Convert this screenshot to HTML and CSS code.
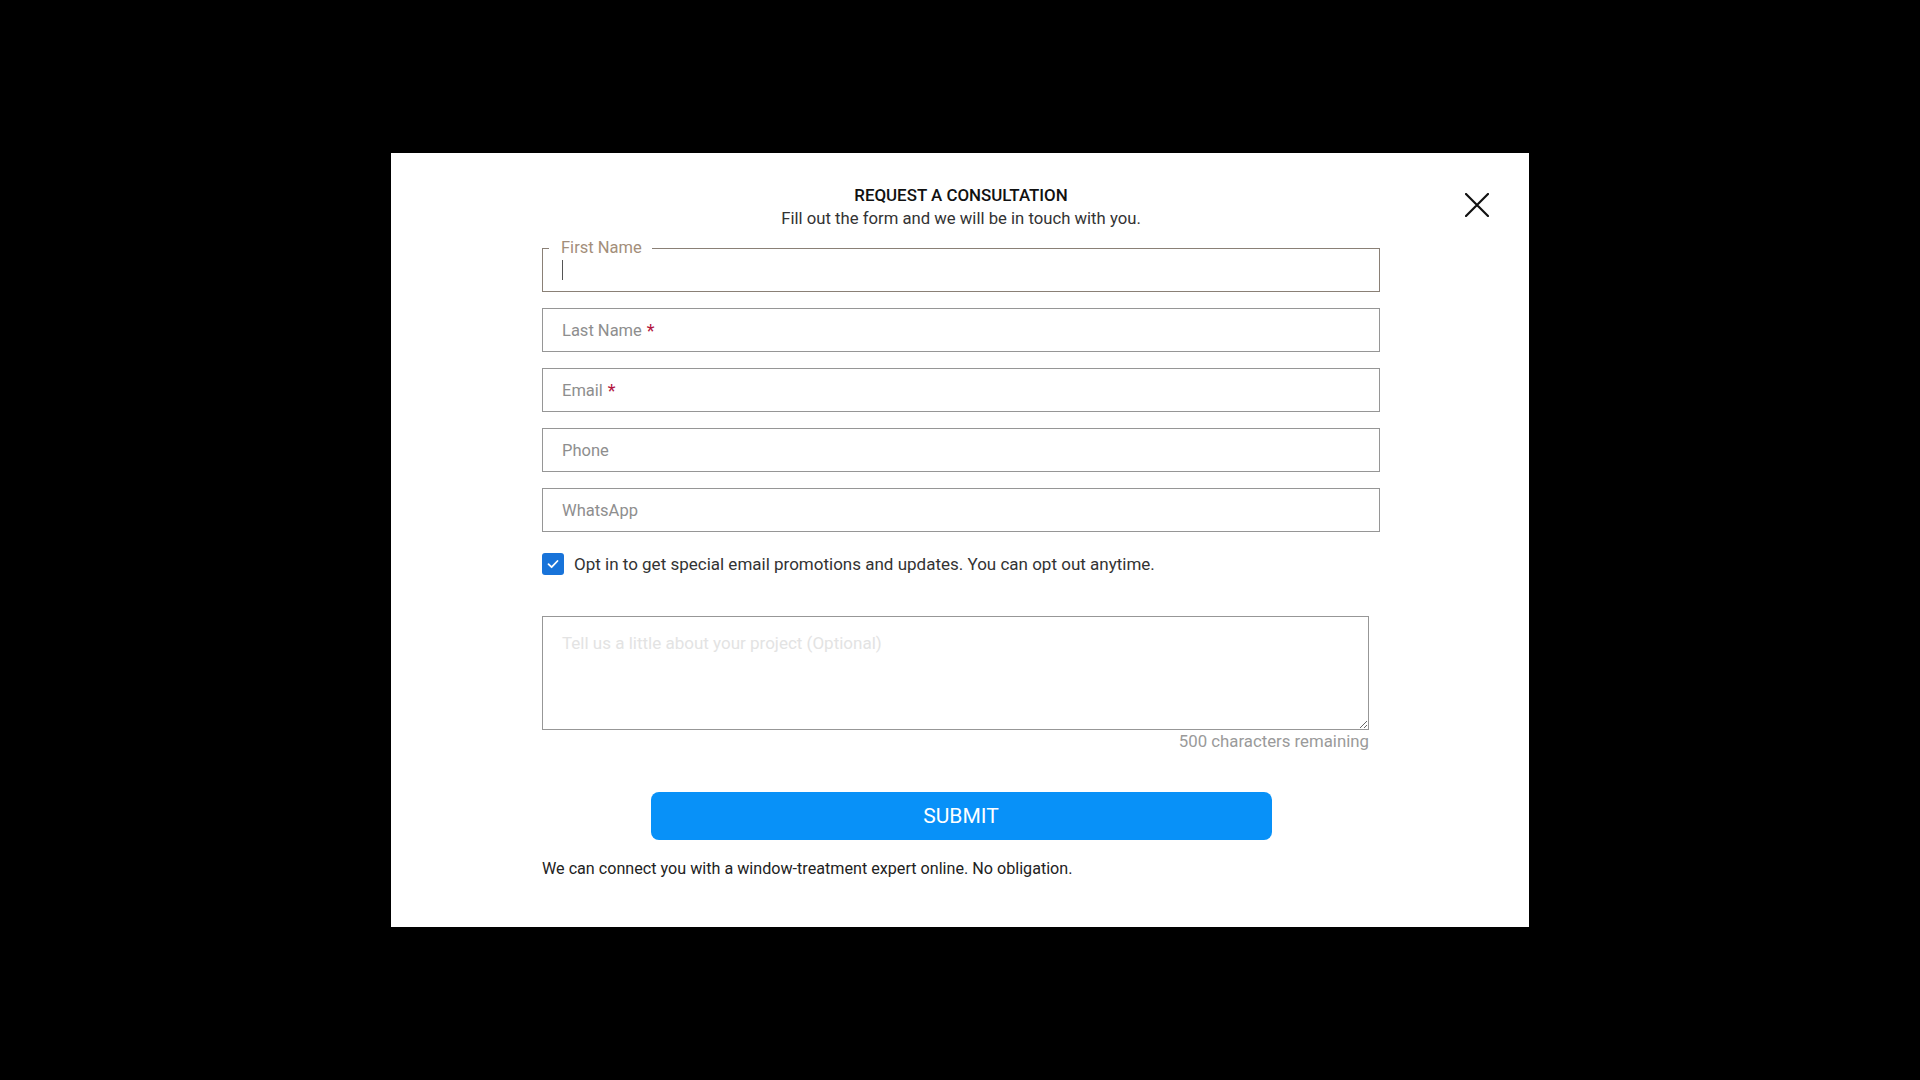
FILE: index.html
```html
<!DOCTYPE html>
<html lang="en">
<head>
<meta charset="utf-8">
<title>Request a Consultation</title>
<link rel="stylesheet" href="styles.css">
</head>
<body>
<div class="modal">
  <button class="close" aria-label="Close">
    <svg viewBox="0 0 24 24" width="24" height="24"><path d="M1 1 L23 23 M23 1 L1 23" stroke="#111" stroke-width="2.2" stroke-linecap="round" fill="none"/></svg>
  </button>
  <div class="title">REQUEST A CONSULTATION</div>
  <div class="subtitle">Fill out the form and we will be in touch with you.</div>
  <div class="fields">
    <div class="field focused">
      <span class="legend">First Name</span>
      <span class="caret"></span>
    </div>
    <div class="field"><span class="ph">Last Name</span><span class="req">*</span></div>
    <div class="field"><span class="ph">Email</span><span class="req">*</span></div>
    <div class="field"><span class="ph">Phone</span></div>
    <div class="field"><span class="ph">WhatsApp</span></div>
  </div>
  <div class="optin">
    <span class="checkbox">
      <svg viewBox="0 0 22 22" width="22" height="22"><path d="M6.5 11.2 L9.6 14.2 L15.5 8" stroke="#fff" stroke-width="1.8" fill="none" stroke-linecap="round" stroke-linejoin="round"/></svg>
    </span>
    <span class="optin-text">Opt in to get special email promotions and updates. You can opt out anytime.</span>
  </div>
  <div class="project">
    <textarea class="textarea" placeholder="Tell us a little about your project (Optional)"></textarea>
    <div class="counter">500 characters remaining</div>
  </div>
  <button class="submit">SUBMIT</button>
  <div class="footer">We can connect you with a window-treatment expert online. No obligation.</div>
</div>
</body>
</html>
```
FILE: styles.css
```css
html, body {
  margin: 0;
  padding: 0;
  background: #000;
}
body {
  width: 1920px;
  height: 1080px;
  display: flex;
  align-items: center;
  justify-content: center;
  font-family: Roboto, "Liberation Sans", Arial, sans-serif;
}
.modal {
  position: relative;
  width: 1138px;
  height: 774px;
  box-sizing: border-box;
  padding: 32px 149px 0 151px;
  background: #fff;
  display: flex;
  flex-direction: column;
}
.close {
  position: absolute;
  top: 40px;
  right: 40px;
  width: 24px;
  height: 24px;
  padding: 0;
  border: 0;
  background: none;
}
.close svg { display: block; }
.title {
  font-size: 16.9px;
  font-weight: 500;
  line-height: 20px;
  text-align: center;
  color: #111;
}
.subtitle {
  margin-top: 4px;
  font-size: 16.7px;
  line-height: 20px;
  text-align: center;
  color: #333;
}
.fields {
  margin-top: 19px;
  display: flex;
  flex-direction: column;
  gap: 16px;
}
.field {
  position: relative;
  height: 44px;
  box-sizing: border-box;
  border: 1px solid #969696;
  display: flex;
  align-items: center;
  padding: 2px 0 0 19px;
  font-size: 16.5px;
  line-height: 20px;
  color: #8e8e8e;
}
.field.focused {
  border-color: #8a8076;
  padding-top: 0;
}
.legend {
  position: absolute;
  top: -11px;
  left: 6px;
  padding: 0 10px 0 12px;
  background: #fff;
  color: #a38e7a;
  font-size: 16.5px;
  line-height: 20px;
}
.caret {
  width: 1px;
  height: 20px;
  background: #555;
}
.req {
  margin-left: 5px;
  color: #b3163f;
  font-size: 18px;
}
.optin {
  margin-top: 21px;
  display: flex;
  align-items: center;
  gap: 10px;
}
.checkbox {
  width: 22px;
  height: 22px;
  border-radius: 3px;
  background: #1873d9;
  flex: none;
}
.checkbox svg { display: block; }
.optin-text {
  font-size: 17px;
  line-height: 20px;
  color: #333;
}
.project {
  margin-top: 41px;
  width: 827px;
  display: flex;
  flex-direction: column;
}
.textarea {
  display: block;
  width: 827px;
  height: 114px;
  box-sizing: border-box;
  margin: 0;
  border: 1px solid #979797;
  border-radius: 0;
  padding: 16px 19px 16px;
  font-family: Roboto, "Liberation Sans", Arial, sans-serif;
  font-size: 17px;
  line-height: 20px;
  color: #333;
  resize: vertical;
  outline: none;
}
.textarea::placeholder {
  color: #e3e3e3;
}
.counter {
  margin-top: 1px;
  text-align: right;
  font-size: 16.8px;
  line-height: 20px;
  color: #9a9a9a;
}
.submit {
  margin: 41px auto 0;
  width: 621px;
  height: 48px;
  border: 0;
  border-radius: 8px;
  background: #0891f8;
  color: #fff;
  font-family: Roboto, "Liberation Sans", Arial, sans-serif;
  font-size: 21px;
  padding: 0;
}
.footer {
  margin-top: 19px;
  font-size: 16.15px;
  line-height: 20px;
  color: #222;
}
```
